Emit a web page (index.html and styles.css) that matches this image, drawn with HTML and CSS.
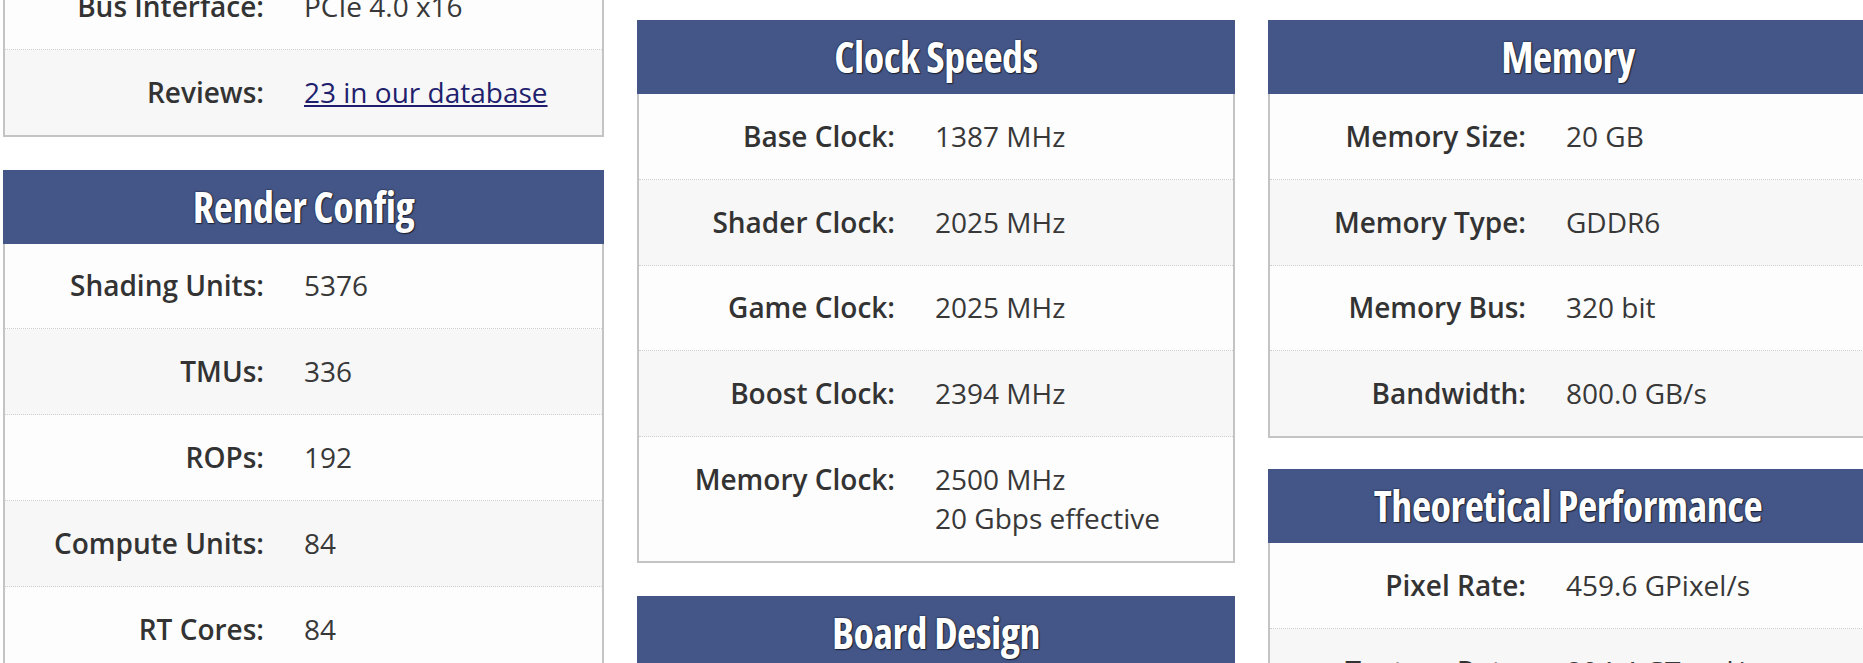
FILE: index.html
```html
<!DOCTYPE html>
<html lang="en">
<head>
<meta charset="utf-8">
<title>GPU Specs</title>
<link rel="stylesheet" href="styles.css">
</head>
<body>
<div class="page">
  <div class="column column-left">
    <section class="box">
      <div class="rows">
        <div class="row"><div class="label">Bus Interface:</div><div class="value">PCIe 4.0 x16</div></div>
        <div class="row"><div class="label">Reviews:</div><div class="value"><a href="#">23 in our database</a></div></div>
      </div>
    </section>
    <section class="box">
      <h2 class="box-title"><span>Render Config</span></h2>
      <div class="rows">
        <div class="row"><div class="label">Shading Units:</div><div class="value">5376</div></div>
        <div class="row"><div class="label">TMUs:</div><div class="value">336</div></div>
        <div class="row"><div class="label">ROPs:</div><div class="value">192</div></div>
        <div class="row"><div class="label">Compute Units:</div><div class="value">84</div></div>
        <div class="row"><div class="label">RT Cores:</div><div class="value">84</div></div>
        <div class="row"><div class="label">L0 Cache:</div><div class="value">1.3 MB</div></div>
      </div>
    </section>
  </div>
  <div class="column">
    <section class="box">
      <h2 class="box-title"><span>Clock Speeds</span></h2>
      <div class="rows">
        <div class="row"><div class="label">Base Clock:</div><div class="value">1387 MHz</div></div>
        <div class="row"><div class="label">Shader Clock:</div><div class="value">2025 MHz</div></div>
        <div class="row"><div class="label">Game Clock:</div><div class="value">2025 MHz</div></div>
        <div class="row"><div class="label">Boost Clock:</div><div class="value">2394 MHz</div></div>
        <div class="row"><div class="label">Memory Clock:</div><div class="value">2500 MHz<br>20 Gbps effective</div></div>
      </div>
    </section>
    <section class="box">
      <h2 class="box-title"><span>Board Design</span></h2>
      <div class="rows">
        <div class="row"><div class="label">Slot Width:</div><div class="value">Dual-slot</div></div>
      </div>
    </section>
  </div>
  <div class="column column-right">
    <section class="box">
      <h2 class="box-title"><span>Memory</span></h2>
      <div class="rows">
        <div class="row"><div class="label">Memory Size:</div><div class="value">20 GB</div></div>
        <div class="row"><div class="label">Memory Type:</div><div class="value">GDDR6</div></div>
        <div class="row"><div class="label">Memory Bus:</div><div class="value">320 bit</div></div>
        <div class="row"><div class="label">Bandwidth:</div><div class="value">800.0 GB/s</div></div>
      </div>
    </section>
    <section class="box">
      <h2 class="box-title"><span>Theoretical Performance</span></h2>
      <div class="rows">
        <div class="row"><div class="label">Pixel Rate:</div><div class="value">459.6 GPixel/s</div></div>
        <div class="row"><div class="label">Texture Rate:</div><div class="value">804.4 GTexel/s</div></div>
      </div>
    </section>
  </div>
</div>
</body>
</html>
```

FILE: styles.css
```css
html, body {
  margin: 0;
  padding: 0;
  overflow: hidden;
  background: #ffffff;
}

body {
  font-family: "Open Sans", "DejaVu Sans", sans-serif;
  font-size: 28px;
  color: #333333;
  width: 1863px;
  height: 663px;
}

.page {
  display: grid;
  grid-template-columns: 601px 598px 600px;
  column-gap: 33px;
  align-items: start;
  padding: 20px 0 0 3px;
}

.column {
  display: flex;
  flex-direction: column;
  gap: 33px;
}

.column-left {
  margin-top: -56px;
}

.column-right {
  margin-top: -1px;
  gap: 31px;
}

.box {
  display: flex;
  flex-direction: column;
}

.box-title {
  margin: 0;
  height: 74px;
  background: #445687;
  color: #ffffff;
  text-align: center;
  font-family: "Open Sans", sans-serif;
  font-weight: 700;
  font-size: 42px;
  font-stretch: 75%;
  line-height: 74px;
  letter-spacing: -0.5px;
  text-shadow: 0 0 2px rgba(0, 0, 0, 0.8), 1px 1px 1px rgba(0, 0, 0, 0.5);
}

.column-right .box:first-child .box-title {
  margin-top: 1px;
}

.rows {
  border: 2px solid #c4c4c4;
  border-top: none;
}

.row {
  display: grid;
  grid-template-columns: 256px 1fr;
  column-gap: 40px;
  padding: 22.8px 0;
  line-height: 39.2px;
  background: #fdfdfd;
  border-bottom: 1px dotted #cfcfcf;
}

.column-left .row {
  grid-template-columns: 259px 1fr;
}

.row:nth-child(even) {
  background: #f7f7f7;
}

.row:last-child {
  border-bottom: none;
}

.label {
  text-align: right;
  font-weight: 600;
  color: #333333;
}

.value {
  color: #383838;
}

.value a {
  color: #1f1f6e;
  text-decoration: underline;
}
```
